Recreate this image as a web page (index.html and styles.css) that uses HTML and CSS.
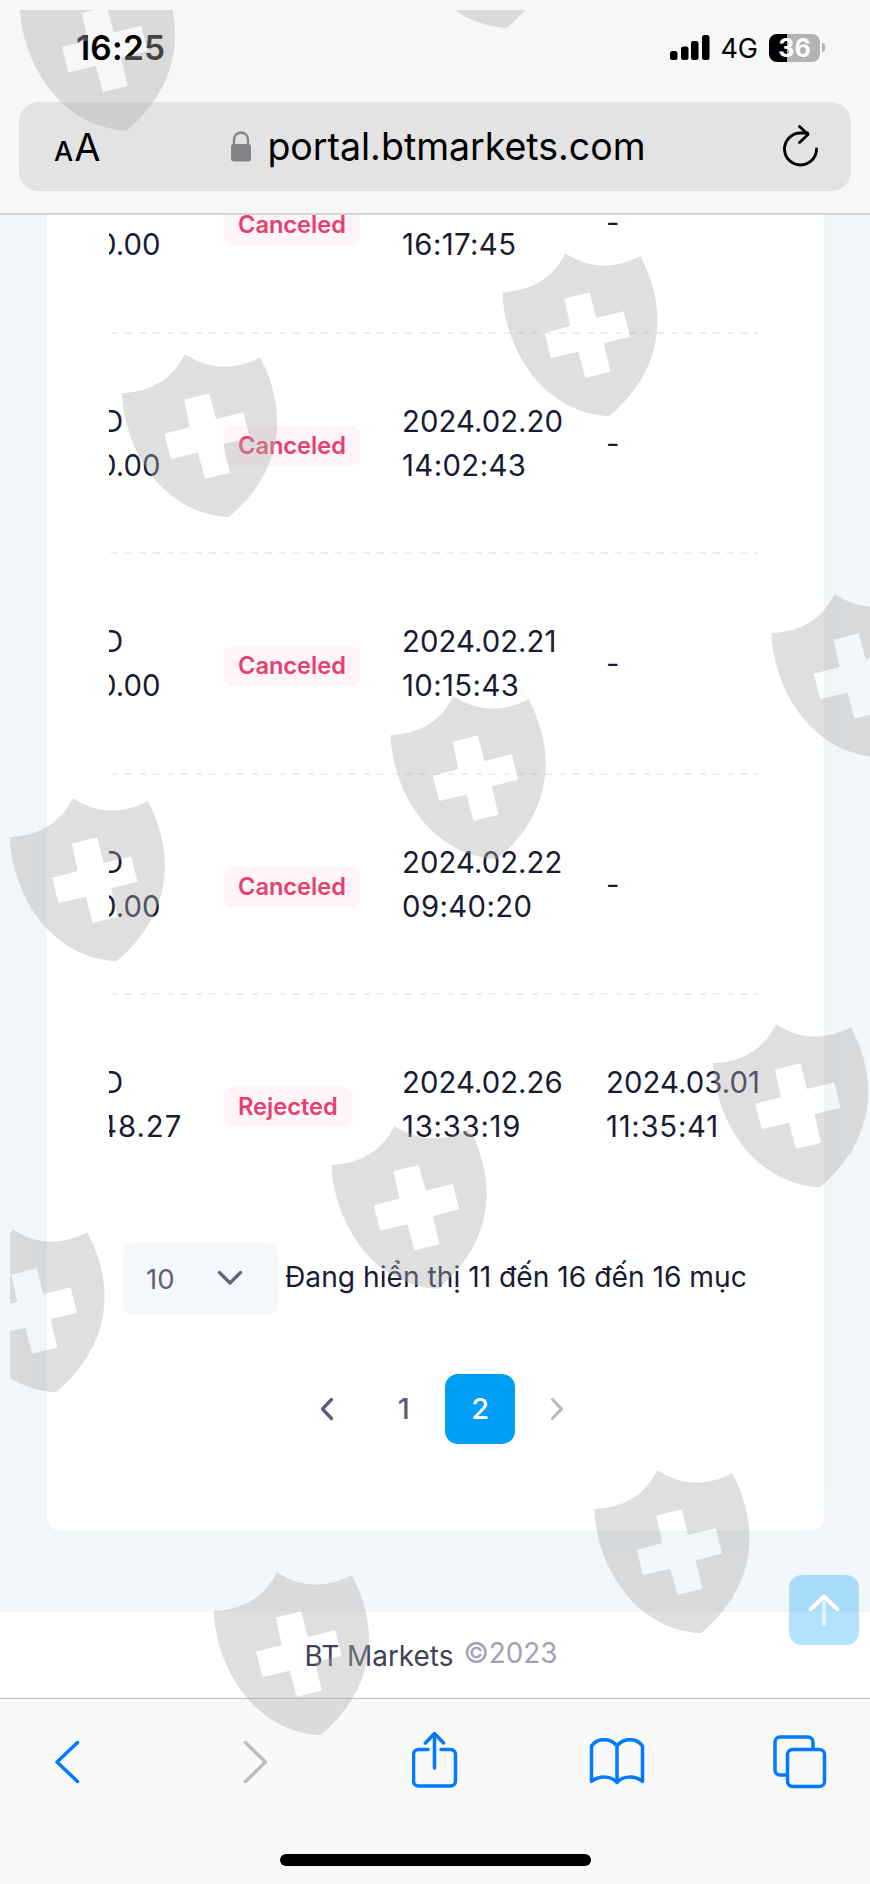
FILE: index.html
```
<!DOCTYPE html>
<html lang="vi">
<head>
<meta charset="utf-8">
<title>BT Markets</title>
<link rel="stylesheet" href="styles.css">
</head>
<body>
<div class="phone">
  <header class="top">
    <div class="status">
      <span class="clock">16:25</span>
      <div class="indicators">
        <svg class="signal" width="40" height="26" viewBox="0 0 40 26"><rect x="0" y="16" width="7.500" height="9" rx="2.500"/><rect x="11" y="11.500" width="7.500" height="13.500" rx="2.500"/><rect x="21" y="6" width="7.500" height="19" rx="2.500"/><rect x="32" y="0" width="7.500" height="25" rx="2.500"/></svg>
        <span class="net">4G</span>
        <div class="battery"><span>36</span></div>
        <i class="nub"></i>
      </div>
    </div>
    <div class="address">
      <span class="aa"><small>A</small>A</span>
      <div class="url">
        <svg width="22" height="32" viewBox="0 0 22 32"><rect x="1" y="13" width="20" height="17.500" rx="3" fill="#828287"/><path d="M4 14V8.500a7 7 0 0 1 14 0V14" fill="none" stroke="#828287" stroke-width="2.300"/></svg>
        <span>portal.btmarkets.com</span>
      </div>
      <svg class="reload" width="38" height="44" viewBox="0 0 38 44"><path d="M34.500 24a16 16 0 1 1-16-16h7" fill="none" stroke="#000" stroke-width="2.900" stroke-linecap="round"/><path d="M17.500 1.500l8.500 8-8.500 8" fill="none" stroke="#000" stroke-width="2.900" stroke-linecap="round" stroke-linejoin="round"/></svg>
    </div>
  </header>
  <main class="page">
    <section class="card">
      <div class="table">
        <div class="row"><div class="amount"><span class="cur">D</span><br>0.00</div><div><span class="badge">Canceled</span></div><div class="date">2024.02.19<br><span class="time">16:17:45</span></div><div>-</div></div>
        <div class="row"><div class="amount"><span class="cur">D</span><br>0.00</div><div><span class="badge">Canceled</span></div><div class="date">2024.02.20<br><span class="time">14:02:43</span></div><div>-</div></div>
        <div class="row"><div class="amount"><span class="cur">D</span><br>0.00</div><div><span class="badge">Canceled</span></div><div class="date">2024.02.21<br><span class="time">10:15:43</span></div><div>-</div></div>
        <div class="row"><div class="amount"><span class="cur">D</span><br>0.00</div><div><span class="badge">Canceled</span></div><div class="date">2024.02.22<br><span class="time">09:40:20</span></div><div>-</div></div>
        <div class="row"><div class="amount"><span class="cur">D</span><br><span class="sum">48.27</span></div><div><span class="badge">Rejected</span></div><div class="date">2024.02.26<br><span class="time wide">13:33:19</span></div><div class="date">2024.03.01<br><span class="time wide">11:35:41</span></div></div>
      </div>
      <div class="summary">
        <div class="select"><span>10</span><svg width="26" height="17" viewBox="0 0 26 17"><path d="M2.500 2.500L13 13 23.500 2.500" fill="none" stroke="#66647f" stroke-width="3.300" stroke-linecap="round" stroke-linejoin="round"/></svg></div>
        <span class="info">Đang hiển thị 11 đến 16 đến 16 mục</span>
      </div>
      <nav class="pager">
        <a><svg width="14" height="24" viewBox="0 0 14 24"><path d="M11.500 2.500L2.500 12l9 9.500" fill="none" stroke="#605d7a" stroke-width="3.300" stroke-linecap="round" stroke-linejoin="round"/></svg></a>
        <a>1</a>
        <a class="active">2</a>
        <a><svg width="14" height="24" viewBox="0 0 14 24"><path d="M2.500 2.500L11.500 12l-9 9.500" fill="none" stroke="#b6b5c3" stroke-width="3" stroke-linecap="round" stroke-linejoin="round"/></svg></a>
      </nav>
    </section>
    <footer class="footer"><span class="brand">BT Markets</span><span class="year">©2023</span></footer>
  </main>
  <nav class="toolbar">
    <div class="tools">
      <svg width="26" height="44" viewBox="0 0 26 44"><path d="M23.500 2.500L3 22l20.500 19.500"/></svg>
      <svg class="off" width="26" height="44" viewBox="0 0 26 44"><path d="M3.500 2.500L23.500 22l-20 19.500"/></svg>
      <svg class="share" width="46" height="58" viewBox="0 0 46 58"><path d="M16 18.500H6.500a5 5 0 0 0-5 5V50a5 5 0 0 0 5 5h32a5 5 0 0 0 5-5V23.500a5 5 0 0 0-5-5H29M22.500 37V3M13.500 12l9-9.500 9 9.500"/></svg>
      <svg width="56" height="48" viewBox="0 0 56 48"><path d="M28 8C22-.5 8-.5 2.500 8v35.500C10 37.500 22 37.500 28 44.500 34 37.500 46 37.500 53.500 43.500V8C48-.5 34-.5 28 8zV44"/></svg>
      <svg width="54" height="54" viewBox="0 0 54 54"><rect x="14.500" y="14.500" width="37" height="37" rx="5"/><path d="M14 40H7a5 5 0 0 1-5-5V7a5 5 0 0 1 5-5h28a5 5 0 0 1 5 5v7"/></svg>
    </div>
    <div class="home"></div>
  </nav>
  <div class="totop"><svg width="32" height="34" viewBox="0 0 32 34"><path d="M16 10v21" stroke="#fff" stroke-opacity=".6" stroke-width="4.500" stroke-linecap="round"/><path d="M3 16L16 3.500 29 16" fill="none" stroke="#fff" stroke-width="4.500" stroke-linecap="round" stroke-linejoin="round"/></svg></div>
  <svg class="shields" width="860" height="1874" viewBox="10 10 860 1874">
    <defs><path id="shield" fill-rule="evenodd" d="M0 39.300Q45 37 63 .3Q99 23.600 138 3.300C163 50 167 112 106.700 163.300C38 159 2 93 0 39.300zM62 45.700L87.300 39.300 94 65 121.300 58.300 127.700 83.700 101.300 90.300 108 118.700 83 124.700 76 98.700 48.700 105 42.300 79.700 68 73z"/></defs>
    <use href="#shield" x="19.800" y="-32.600"/><use href="#shield" x="400" y="-135.300"/>
    <use href="#shield" x="502.300" y="253"/><use href="#shield" x="122" y="354"/>
    <use href="#shield" x="771.500" y="594"/><use href="#shield" x="390.500" y="696"/>
    <use href="#shield" x="9.800" y="798"/><use href="#shield" x="713" y="1024"/>
    <use href="#shield" x="331.500" y="1125.600"/><use href="#shield" x="-50.700" y="1229"/>
    <use href="#shield" x="594.300" y="1470"/><use href="#shield" x="213.800" y="1572"/>
  </svg>
</div>
</body>
</html>
```
FILE: styles.css
```
* { box-sizing: border-box; }
body { margin: 0; font-family: Inter, "Liberation Sans", sans-serif; color: #181c32; }
.phone { position: relative; width: 870px; height: 1884px; overflow: hidden; display: flex; flex-direction: column; background: #f9f9fa; }
.top { height: 215px; flex: none; background: #f7f7f8; border-bottom: 2px solid #d5d5d7; }
.status { height: 102px; padding: 0 45px 7px 76px; display: flex; align-items: center; justify-content: space-between; }
.clock { font-size: 33.500px; font-weight: 600; color: #000; letter-spacing: .2px; }
.indicators { display: flex; align-items: center; }
.signal { position: relative; left: 2px; }
.net { font-size: 27px; margin: 2px 11px 0 12px; color: #000; }
.battery { width: 51px; height: 28px; border-radius: 8px; background: linear-gradient(90deg, #000 36%, #b3b3b4 36%); color: #fff; font-size: 25px; font-weight: 700; line-height: 28px; text-align: center; }
.nub { width: 3px; height: 9px; margin-left: 2px; border-radius: 0 4px 4px 0; background: #b3b3b4; }
.address { height: 89px; margin: 0 19px; padding: 0 31px 0 35px; border-radius: 20px; background: #e3e3e4; display: flex; align-items: center; justify-content: space-between; color: #000; }
.aa { width: 56px; font-size: 38px; letter-spacing: -1px; white-space: nowrap; }
.aa small { font-size: 27px; margin-right: 2px; font-weight: 500; }
.url { display: flex; align-items: center; gap: 15px; font-size: 37.500px; position: relative; left: -8px; }
.page { height: 1483px; flex: none; overflow: hidden; background: #f3f7fa; display: flex; flex-direction: column; }
.card { width: 777px; height: 1418px; margin: -102px auto 0 47px; flex: none; border-radius: 14px; background: #fff; padding: 0 63px 0 62px; box-shadow: 0 0 50px rgba(70, 90, 120, .03); }
.table { width: 652px; overflow: hidden; }
.row { height: 220.500px; display: grid; grid-template-columns: 129px 164px 204px 1fr; align-items: center; font-size: 29.300px; line-height: 44px; white-space: nowrap; background: repeating-linear-gradient(90deg, #eeeef1 0 7px, transparent 7px 14px) 2px bottom / 647px 2px no-repeat; }
.row:last-child { background: none; }
.amount { margin-left: -11px; }
.cur { margin-left: 4px; }
.sum { letter-spacing: 1px; }
.date { letter-spacing: .05px; }
.time { letter-spacing: .4px; }
.time.wide { letter-spacing: .75px; }
.badge { display: inline-block; margin-left: -14px; height: 40px; line-height: 40px; padding: 0 14px; border-radius: 8px; background: #fff5f8; color: #e5406f; font-size: 23.600px; font-weight: 600; }
.summary { display: flex; align-items: center; margin: 27px 0 0 14px; gap: 7px; white-space: nowrap; }
.select { width: 155px; height: 72px; padding: 0 35px 0 23px; border-radius: 10px; background: #f5f8fa; display: flex; align-items: center; justify-content: space-between; font-size: 27.500px; color: #5e6078; }
.info { font-size: 28.200px; padding-bottom: 4px; }
.pager { margin: 59px 0 0 14px; display: flex; justify-content: center; gap: 6.500px; }
.pager a { width: 70px; height: 70px; border-radius: 13px; display: flex; align-items: center; justify-content: center; font-size: 29px; font-weight: 500; color: #605d7a; }
.pager .active { background: #009ef7; color: #fff; }
.footer { margin-top: auto; height: 86px; flex: none; background: #fff; display: flex; justify-content: center; align-items: baseline; padding-top: 27px; gap: 10px; padding-right: 8px; }
.brand { font-size: 27.900px; color: #3f4254; }
.year { font-size: 27.800px; color: #a1a0b8; transform: translateY(-3px); }
.toolbar { flex: 1; border-top: 1px solid #bfbfc2; background: #f9f9fa; display: flex; flex-direction: column; align-items: center; }
.tools { width: 100%; height: 125px; padding-left: 54px; display: grid; grid-template-columns: 188px 170px 177px 184px auto; align-items: center; fill: none; stroke: #007aff; stroke-width: 3.500; stroke-linecap: round; stroke-linejoin: round; }
.tools .off { stroke: #bdbdbf; }
.tools .share { margin-top: -3px; }
.home { width: 311px; height: 12px; margin-top: 30px; border-radius: 6px; background: #000; }
.totop { position: absolute; left: 788.500px; top: 1575px; width: 70px; height: 70px; border-radius: 13px; background: rgba(0, 158, 247, .3); display: flex; align-items: center; justify-content: center; }
.shields { position: absolute; left: 10px; top: 10px; fill: rgba(173, 173, 173, .39); pointer-events: none; }
```
